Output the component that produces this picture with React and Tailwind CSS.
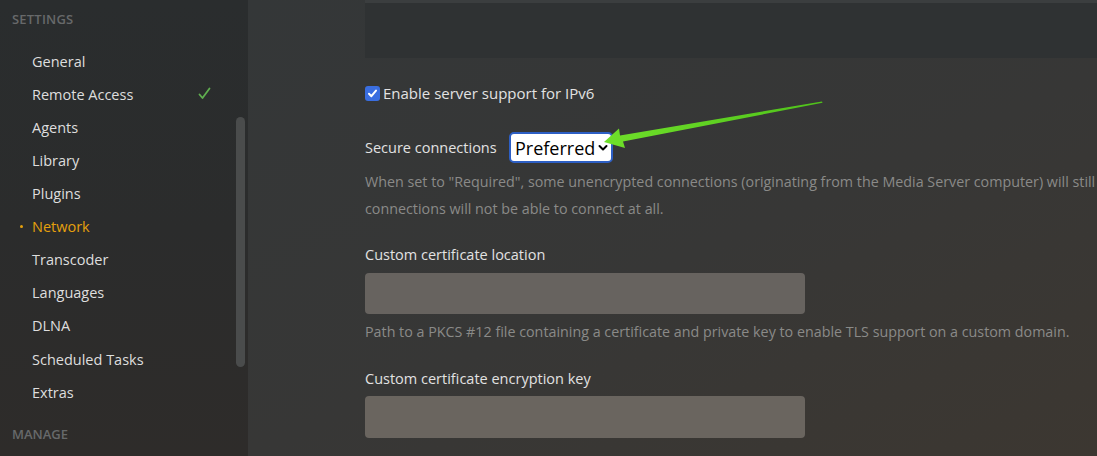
import React from "react";

const items = [
  "General",
  "Remote Access",
  "Agents",
  "Library",
  "Plugins",
  "Network",
  "Transcoder",
  "Languages",
  "DLNA",
  "Scheduled Tasks",
  "Extras",
];

export default function App() {
  return (
    <div
      className="relative flex h-[456px] w-[1097px] overflow-hidden"
      style={{ fontFamily: '"Open Sans", "Noto Sans", sans-serif' }}
    >
      {/* Sidebar */}
      <div className="relative flex h-full w-[248px] shrink-0 flex-col bg-gradient-to-b from-[#2a2d2e] via-[#2b2c2c] to-[#2e2c2a]">
        <div className="mt-[10px] flex h-[20px] items-center pl-[12px] text-[13px] font-semibold tracking-[0.2px] text-[#67696a]">
          SETTINGS
        </div>
        <div className="mt-[15px] flex flex-col">
          {items.map((it) => (
            <div
              key={it}
              className={`relative flex h-[33.1px] items-center pl-[32px] text-[14.5px] ${
                it === "Network" ? "text-[#e5a00d]" : "text-[#dedede]"
              }`}
            >
              {it === "Network" && (
                <span className="absolute left-[20px] top-[15px] h-[3px] w-[3px] rounded-full bg-[#e5a00d]" />
              )}
              {it}
              {it === "Remote Access" && (
                <svg
                  className="absolute left-[198px] top-[9px]"
                  width="13"
                  height="13"
                  viewBox="0 0 13 13"
                >
                  <path
                    d="M1.5 7.5 L4.5 11 L11.5 1.5"
                    fill="none"
                    stroke="#5fae4f"
                    strokeWidth="1.8"
                    strokeLinecap="round"
                    strokeLinejoin="round"
                  />
                </svg>
              )}
            </div>
          ))}
        </div>
        <div className="mt-[16px] flex h-[20px] items-center pl-[12px] text-[13px] font-semibold text-[#67696a]">
          MANAGE
        </div>
        <div className="absolute left-[236px] top-[117px] h-[250px] w-[9px] rounded-full bg-[#4a4c4c]" />
      </div>

      {/* Main */}
      <div className="relative flex h-full flex-1 flex-col bg-gradient-to-br from-[#343738] via-[#373736] to-[#3d3730] pl-[117px]">
        <div className="h-[3px] w-full bg-[#3b3e3f]" />
        <div className="h-[55px] w-[900px] bg-[#2f3233]" />

        <div className="mt-[27px] flex h-[16px] items-center">
          <span className="flex h-[15px] w-[15px] items-center justify-center rounded-[3px] bg-[#3a6ee0]">
            <svg width="11" height="11" viewBox="0 0 11 11">
              <path
                d="M2 5.8 L4.4 8.2 L9 2.6"
                fill="none"
                stroke="#fff"
                strokeWidth="2"
                strokeLinecap="round"
                strokeLinejoin="round"
              />
            </svg>
          </span>
          <span className="ml-[3px] text-[15px] text-[#e2e2e2]">
            Enable server support for IPv6
          </span>
        </div>

        <div className="mt-[31px] flex h-[31px] items-center">
          <span className="w-[144px] text-[14.5px] text-[#e2e2e2]">Secure connections</span>
          <div className="flex h-[31px] w-[104px] items-center rounded-[5px] border-2 border-[#2d5fc4] bg-white pl-[4px]">
            <span className="text-[18px] leading-none text-black">Preferred</span>
            <svg className="ml-[3px]" width="10" height="8" viewBox="0 0 10 8">
              <path
                d="M1.5 2 L5 5.5 L8.5 2"
                fill="none"
                stroke="#000"
                strokeWidth="2"
                strokeLinecap="round"
                strokeLinejoin="round"
              />
            </svg>
          </div>
        </div>

        <div className="mt-[5px] whitespace-nowrap text-[14.3px] leading-[27px] text-[#8a8a88]">
          <div>
            When set to "Required", some unencrypted connections (originating from the Media Server computer) will still
          </div>
          <div>connections will not be able to connect at all.</div>
        </div>

        <div className="mt-[23px] text-[14.5px] leading-[20px] text-[#e2e2e2]">
          Custom certificate location
        </div>
        <div className="mt-[8px] h-[41px] w-[440px] rounded-[4px] bg-[#67635f]" />
        <div className="mt-[8px] whitespace-nowrap text-[14.3px] leading-[20px] text-[#8a8a88]">
          Path to a PKCS #12 file containing a certificate and private key to enable TLS support on a custom domain.
        </div>

        <div className="mt-[27px] text-[14.5px] leading-[20px] text-[#e2e2e2]">
          Custom certificate encryption key
        </div>
        <div className="mt-[7px] h-[42px] w-[440px] rounded-[4px] bg-[#6a655f]" />
      </div>

      {/* Annotation arrow */}
      <svg
        className="pointer-events-none absolute left-0 top-0"
        width="1097"
        height="456"
        viewBox="0 0 1097 456"
      >
        <defs>
          <linearGradient id="ag" x1="822" y1="102" x2="604" y2="141" gradientUnits="userSpaceOnUse">
            <stop offset="0" stopColor="#4fc21a" />
            <stop offset="1" stopColor="#6fe02a" />
          </linearGradient>
        </defs>
        <path
          d="M822 101.5 L822.5 102.8 L623 141.5 L625 148 L604 142 L619 128.5 L620 135.5 Z"
          fill="url(#ag)"
        />
      </svg>
    </div>
  );
}
